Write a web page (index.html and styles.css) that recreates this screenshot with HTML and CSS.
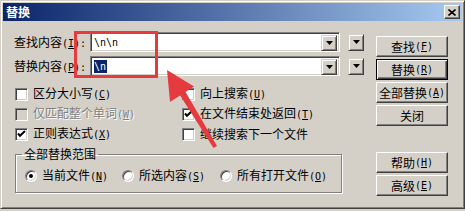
FILE: index.html
```html
<!DOCTYPE html>
<html lang="zh-CN">
<head>
<meta charset="utf-8">
<title>替换</title>
<link rel="stylesheet" href="styles.css">
</head>
<body>
<div class="window">
  <div class="titlebar">
    <span class="title">替换</span>
    <span class="close"><svg width="8" height="7" viewBox="0 0 8 7"><path d="M0.5 0.5L7.5 6.5M7.5 0.5L0.5 6.5" stroke="#000" stroke-width="1.6"/></svg></span>
  </div>
  <div class="content">
    <div class="main">
      <div class="field">
        <label class="flabel">查找内容<span class="acc">(<u>I</u>):</span></label>
        <div class="combo"><span class="ctext">\n\n</span><span class="drop"><svg width="7" height="4" viewBox="0 0 7 4"><path d="M0 0h7L3.5 4z"/></svg></span></div>
        <span class="xbtn"><svg width="7" height="4" viewBox="0 0 7 4"><path d="M0 0h7L3.5 4z"/></svg></span>
      </div>
      <div class="field second">
        <label class="flabel">替换内容<span class="acc">(<u>P</u>):</span></label>
        <div class="combo"><span class="ctext"><span class="sel">\n</span></span><span class="drop"><svg width="7" height="4" viewBox="0 0 7 4"><path d="M0 0h7L3.5 4z"/></svg></span></div>
        <span class="xbtn"><svg width="7" height="4" viewBox="0 0 7 4"><path d="M0 0h7L3.5 4z"/></svg></span>
      </div>
      <div class="options">
        <div class="opt"><span class="cb"></span><span>区分大小写<span class="acc">(<u>C</u>)</span></span></div>
        <div class="opt"><span class="cb"></span><span>向上搜索<span class="acc">(<u>U</u>)</span></span></div>
        <div class="opt disabled"><span class="cb"></span><span>仅匹配整个单词<span class="acc">(<u>W</u>)</span></span></div>
        <div class="opt"><span class="cb"><svg width="9" height="9" viewBox="0 0 9 9"><path d="M1 3.5L3 5.8L8 1" fill="none" stroke="#000" stroke-width="2"/></svg></span><span>在文件结束处返回<span class="acc">(<u>T</u>)</span></span></div>
        <div class="opt"><span class="cb"><svg width="9" height="9" viewBox="0 0 9 9"><path d="M1 3.5L3 5.8L8 1" fill="none" stroke="#000" stroke-width="2"/></svg></span><span>正则表达式<span class="acc">(<u>X</u>)</span></span></div>
        <div class="opt"><span class="cb"></span><span>继续搜索下一个文件</span></div>
      </div>
      <fieldset class="group">
        <legend>全部替换范围</legend>
        <div class="radios">
          <div class="ropt r1"><span class="rb on"></span><span>当前文件<span class="acc">(<u>N</u>)</span></span></div>
          <div class="ropt r2"><span class="rb"></span><span>所选内容<span class="acc">(<u>S</u>)</span></span></div>
          <div class="ropt"><span class="rb"></span><span>所有打开文件<span class="acc">(<u>O</u>)</span></span></div>
        </div>
      </fieldset>
    </div>
    <div class="buttons">
      <span class="btn">查找<span class="acc">(<u>F</u>)</span></span>
      <span class="btn default">替换<span class="acc">(<u>R</u>)</span></span>
      <span class="btn">全部替换<span class="acc">(<u>A</u>)</span></span>
      <span class="btn">关闭</span>
      <span class="btn help">帮助<span class="acc">(<u>H</u>)</span></span>
      <span class="btn">高级<span class="acc">(<u>E</u>)</span></span>
    </div>
  </div>
  <div class="mark-box"></div>
  <svg class="mark-arrow" width="465" height="211" viewBox="0 0 465 211">
    <polygon points="167,70 194,86.5 170,102" fill="#e53b3e"/>
    <polygon points="179.5,94.5 185,91 217,146 213.5,148" fill="#e53b3e"/>
  </svg>
</div>
</body>
</html>
```
FILE: styles.css
```css
* { box-sizing: border-box; margin: 0; padding: 0; }
html, body {
  width: 465px;
  height: 211px;
  background: #d4d0c8;
  overflow: hidden;
}
body {
  font-family: "Noto Sans CJK SC", "Noto Sans", sans-serif;
  font-size: 12px;
  line-height: 14px;
  color: #000;
}
.window {
  position: relative;
  width: 465px;
  height: 209px;
  background: #d4d0c8;
  border: 1px solid;
  border-color: #d4d0c8 #404040 #404040 #d4d0c8;
  box-shadow: inset 1px 1px #fff, inset -1px -1px #808080;
  padding: 2px;
  display: flex;
  flex-direction: column;
}
.titlebar {
  height: 18px;
  background: linear-gradient(to right, #0a246a, #a6caf0);
  display: flex;
  align-items: center;
  justify-content: space-between;
  padding: 0 2px 0 2px;
}
.title {
  color: #fff;
  font-weight: bold;
  margin-left: 1px;
}
.close {
  width: 16px;
  height: 14px;
  background: #d4d0c8;
  border: 1px solid;
  border-color: #fff #404040 #404040 #fff;
  box-shadow: inset -1px -1px #808080;
  display: flex;
  align-items: center;
  justify-content: center;
}
.acc {
  font-family: "DejaVu Sans Mono", "Liberation Mono", monospace;
  font-size: 10px;
}
.content {
  display: flex;
  gap: 12px;
  padding: 11px 0 0 11px;
}
.main {
  width: 350px;
  display: flex;
  flex-direction: column;
}
.field {
  display: flex;
  align-items: center;
  height: 20px;
}
.field.second { margin-top: 4px; }
.flabel {
  width: 76px;
  white-space: nowrap;
  padding-top: 2px;
}
.combo {
  width: 250px;
  height: 20px;
  background: #fff;
  border: 1px solid;
  border-color: #808080 #fff #fff #808080;
  box-shadow: inset 1px 1px #404040, inset -1px -1px #d4d0c8;
  padding: 2px 2px 2px 2px;
  display: flex;
  align-items: stretch;
}
.ctext {
  flex: 1;
  font-family: "DejaVu Sans Mono", "Liberation Mono", monospace;
  font-size: 10px;
  line-height: 16px;
  padding-left: 1px;
}
.sel {
  background: #0a246a;
  color: #fff;
  padding: 1px 1px 1px 0;
}
.drop, .xbtn {
  width: 16px;
  height: 16px;
  background: #d4d0c8;
  border: 1px solid;
  border-color: #d4d0c8 #404040 #404040 #d4d0c8;
  box-shadow: inset 1px 1px #fff, inset -1px -1px #808080;
  display: flex;
  align-items: center;
  justify-content: center;
}
.xbtn {
  margin-left: 8px;
  height: 17px;
}
.options {
  display: grid;
  grid-template-columns: 167px 1fr;
  grid-auto-rows: 20px;
  margin-top: 8px;
}
.opt {
  display: flex;
  align-items: center;
  gap: 5px;
  padding-left: 1px;
  white-space: nowrap;
}
.cb {
  width: 13px;
  height: 13px;
  flex: none;
  background: #fff;
  border: 1px solid;
  border-color: #808080 #fff #fff #808080;
  box-shadow: inset 1px 1px #404040, inset -1px -1px #d4d0c8;
  display: flex;
  align-items: center;
  justify-content: center;
}
.opt.disabled { color: #808080; text-shadow: 1px 1px #fff; }
.opt.disabled .cb { background: #d4d0c8; }
.group {
  margin: 4px 0 0 1px;
  width: 327px;
  border: 1px solid #808080;
  box-shadow: inset 1px 1px #fff, 1px 1px #fff;
  padding: 0 9px 6px 9px;
}
.group legend {
  padding: 0 2px;
  margin-left: -3px;
  line-height: 12px;
}
.radios {
  display: flex;
  height: 20px;
  margin-top: 6px;
}
.ropt {
  display: flex;
  align-items: center;
  gap: 5px;
  white-space: nowrap;
}
.r1 { width: 97px; }
.r2 { width: 98px; }
.rb {
  width: 12px;
  height: 12px;
  flex: none;
  border-radius: 50%;
  background: #fff;
  border: 1px solid;
  border-color: #808080 #fff #fff #808080;
  box-shadow: inset 1px 1px #404040, inset -1px -1px #d4d0c8;
  display: flex;
  align-items: center;
  justify-content: center;
}
.rb.on::after {
  content: "";
  width: 4px;
  height: 4px;
  border-radius: 50%;
  background: #000;
}
.buttons {
  width: 72px;
  display: flex;
  flex-direction: column;
  gap: 2px;
  margin-top: 4px;
}
.btn {
  height: 21px;
  display: flex;
  align-items: center;
  justify-content: center;
  white-space: nowrap;
  border: 1px solid;
  border-color: #fff #404040 #404040 #fff;
  box-shadow: inset -1px -1px #808080;
}
.btn.default {
  border-color: #000;
  box-shadow: inset 1px 1px #fff, inset -1px -1px #404040, inset -2px -2px #808080;
}
.btn.help { margin-top: 24px; }
.mark-box {
  position: absolute;
  left: 73px;
  top: 30px;
  width: 84px;
  height: 47px;
  border: 3px solid #e53b3e;
}
.mark-arrow {
  position: absolute;
  left: -1px;
  top: -1px;
  pointer-events: none;
}
```
